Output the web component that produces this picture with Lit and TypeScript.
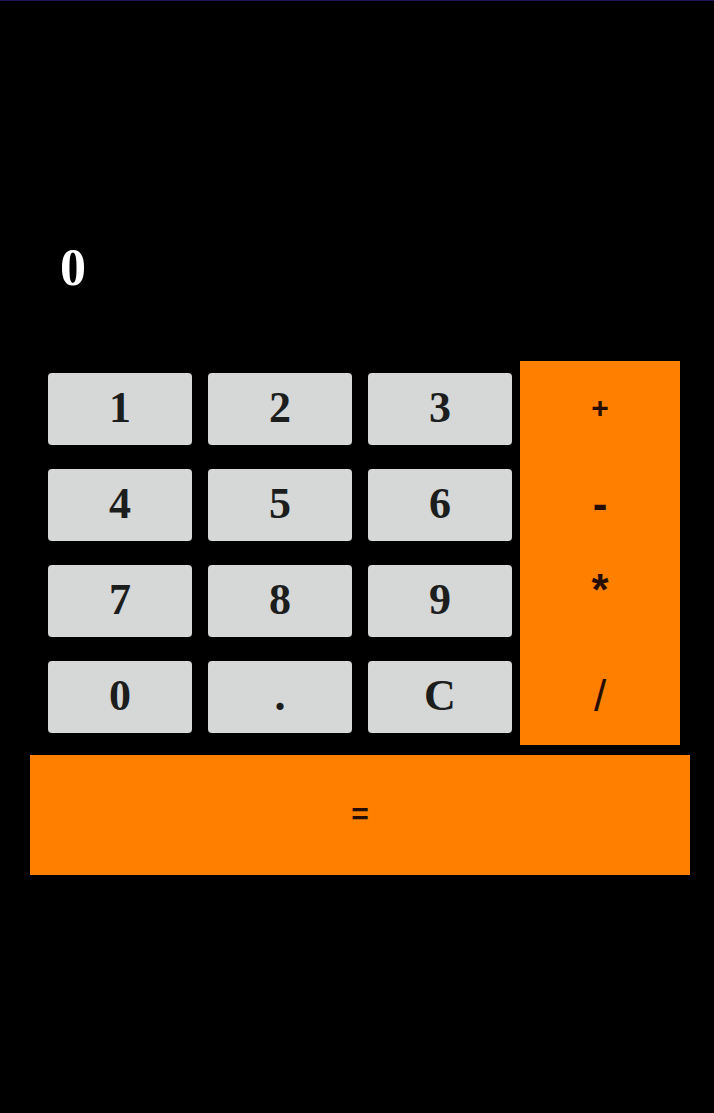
import { LitElement, html, css } from "lit";
import { customElement, state } from "lit/decorators.js";
import { classMap } from "lit/directives/class-map.js";

const DIGITS = ["1", "2", "3", "4", "5", "6", "7", "8", "9", "0", ".", "C"];
const OPERATORS = ["+", "-", "*", "/"];

@customElement("app-root")
export class AppRoot extends LitElement {
  @state() private entry = "0";
  private stored: number | null = null;
  private operator = "";
  private fresh = true;

  static styles = css`
    :host {
      display: flex;
      flex-direction: column;
      box-sizing: border-box;
      min-height: 100vh;
      background: #000;
      border-top: 1px solid #24145c;
      font-family: "Liberation Serif", serif;
      font-weight: 700;
    }
    .display {
      box-sizing: border-box;
      display: block;
      height: 360px;
      padding: 235px 34px 0 60px;
      color: #fff;
      font-size: 52px;
      line-height: 64px;
      overflow: hidden;
    }
    .pad {
      display: grid;
      grid-template-columns: 3fr 1fr;
      padding: 0 34px 0 40px;
    }
    .digits {
      display: grid;
      grid-template-columns: repeat(3, 1fr);
      grid-auto-rows: 72px;
      gap: 24px 16px;
      padding: 12px 8px;
    }
    .operators {
      display: grid;
      grid-auto-rows: 96px;
      background: #ff8000;
    }
    button {
      margin: 0;
      padding: 0 0 2px;
      border: 0;
      font: inherit;
      font-size: 44px;
      line-height: 48px;
      cursor: pointer;
    }
    .digit {
      background: #d6d8d7;
      color: #1c1d1d;
      border-radius: 4px;
    }
    .operator,
    .equals {
      background: #ff8000;
      color: #260d00;
      font-family: "Liberation Sans", sans-serif;
    }
    .small {
      font-size: 30px;
    }
    .slim {
      font-weight: 400;
    }
    .raised {
      padding-bottom: 22px;
    }
    .equals {
      height: 120px;
      margin: 10px 24px 0 30px;
    }
  `;

  private compute(a: number, b: number): number {
    switch (this.operator) {
      case "+":
        return a + b;
      case "-":
        return a - b;
      case "*":
        return a * b;
      default:
        return a / b;
    }
  }

  private pressDigit(key: string) {
    if (key === "C") {
      this.entry = "0";
      this.stored = null;
      this.operator = "";
      this.fresh = true;
      return;
    }
    if (this.fresh) {
      this.entry = key === "." ? "0." : key;
      this.fresh = key === "0";
    } else if (key !== "." || !this.entry.includes(".")) {
      this.entry += key;
    }
  }

  private pressEquals() {
    if (this.operator && this.stored !== null) {
      this.entry = String(this.compute(this.stored, Number(this.entry)));
    }
    this.operator = "";
    this.stored = null;
    this.fresh = true;
  }

  private pressOperator(key: string) {
    this.pressEquals();
    this.stored = Number(this.entry);
    this.operator = key;
  }

  render() {
    return html`
      <output class="display">${this.entry}</output>
      <div class="pad">
        <div class="digits">
          ${DIGITS.map(
            (key) => html`<button class="digit" type="button" @click=${() => this.pressDigit(key)}>${key}</button>`
          )}
        </div>
        <div class="operators">
          ${OPERATORS.map(
            (key) => html`<button
              class=${classMap({ operator: true, small: key === "+", raised: key === "*", slim: key === "/" })}
              type="button"
              @click=${() => this.pressOperator(key)}
            >${key}</button>`
          )}
        </div>
      </div>
      <button class="equals small" type="button" @click=${() => this.pressEquals()}>=</button>
    `;
  }
}
